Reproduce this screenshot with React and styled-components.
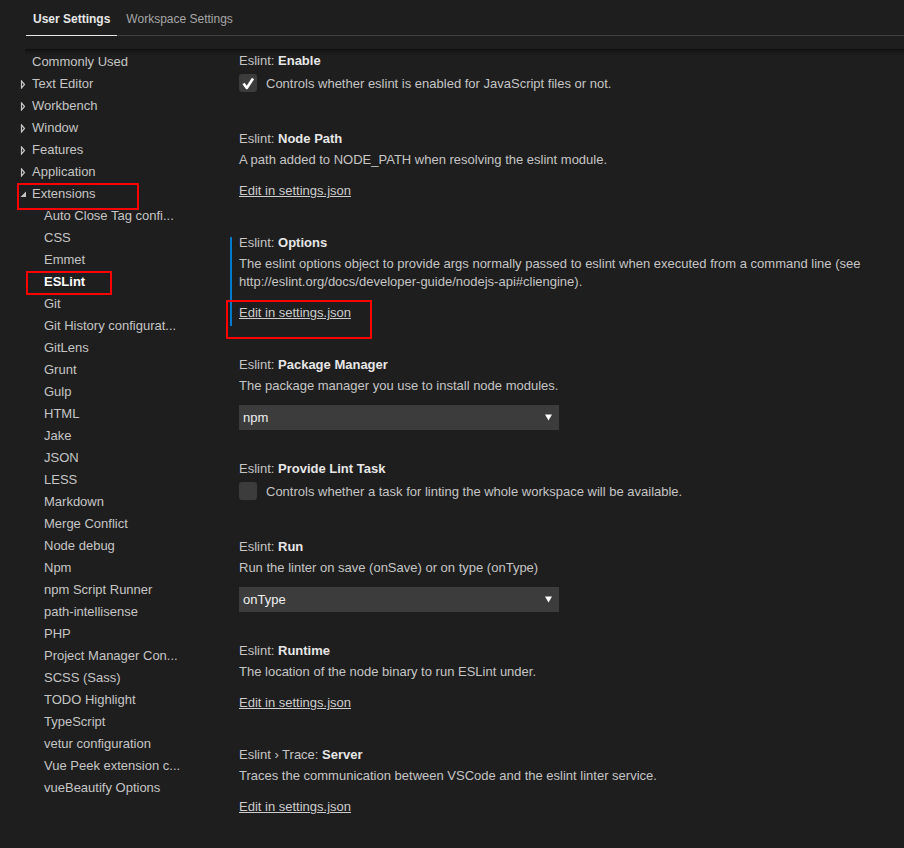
import React from 'react';
import styled, { createGlobalStyle, css } from 'styled-components';

const GlobalStyle = createGlobalStyle`
  html, body {
    margin: 0;
    padding: 0;
    background: #1e1e1e;
  }
  body {
    font-family: "Liberation Sans", Arial, sans-serif;
    font-size: 13px;
    color: #cccccc;
  }
`;

const Page = styled.div`
  min-height: 848px;
  background: #1e1e1e;
  overflow: hidden;
`;

const Header = styled.div`
  display: flex;
  margin-left: 26px;
  height: 35px;
  border-bottom: 1px solid #3f3f3f;
`;

const Tab = styled.div`
  padding: 3px 7px 0;
  margin-right: 2px;
  line-height: 32px;
  font-size: 12px;
  color: #a6a6a6;
  margin-bottom: -1px;
  border-bottom: 1px solid transparent;
  cursor: pointer;
  ${(p) =>
    p.$active &&
    css`
      color: #e7e7e7;
      font-weight: bold;
      border-bottom-color: #e7e7e7;
    `}
`;

const Body = styled.div`
  position: relative;
  display: flex;
  margin-top: 14px;
  &::before {
    content: '';
    position: absolute;
    left: 25px;
    right: 0;
    top: -1px;
    height: 6px;
    box-shadow: #000000 0 6px 6px -6px inset;
  }
`;

const Sidebar = styled.div`
  width: 230px;
  flex-shrink: 0;
  padding-top: 1px;
`;

const Row = styled.div`
  position: relative;
  display: flex;
  align-items: center;
  height: 22px;
  line-height: 22px;
  padding-left: ${(p) => (p.$child ? '44px' : '20px')};
  color: ${(p) => (p.$bold ? '#ffffff' : '#c5c5c5')};
  font-weight: ${(p) => (p.$bold ? 'bold' : 'normal')};
  white-space: nowrap;
  cursor: pointer;
`;

const Twistie = styled.span`
  width: 12px;
  height: 22px;
  display: flex;
  align-items: center;
`;

const Mark = styled.div`
  position: absolute;
  top: ${(p) => p.$top}px;
  left: ${(p) => p.$left}px;
  width: ${(p) => p.$w}px;
  height: ${(p) => p.$h}px;
  border: 2px solid #ff0000;
  box-sizing: border-box;
  pointer-events: none;
`;

const Content = styled.div`
  flex: 1;
  min-width: 0;
  padding-right: 10px;
`;

const Item = styled.div`
  position: relative;
  padding-left: 9px;
  ${(p) =>
    p.$focused &&
    css`
      &::before {
        content: '';
        position: absolute;
        left: 0;
        top: 5px;
        bottom: -4px;
        width: 2px;
        background: #007acc;
      }
    `}
`;

const Title = styled.div`
  line-height: 22px;
  height: 22px;
  color: #c5c5c5;
  b {
    color: #e7e7e7;
  }
`;

const Desc = styled.div`
  margin-top: 1px;
  line-height: 18px;
  color: #c5c5c5;
`;

const LinkRow = styled.div`
  position: relative;
  margin-top: 13px;
  margin-bottom: 32px;
  line-height: 18px;
  display: flex;
`;

const EditLink = styled.a`
  color: #cccccc;
  text-decoration: underline;
  cursor: pointer;
`;

const CheckRow = styled.div`
  display: flex;
  align-items: center;
  height: 22px;
  margin-bottom: 34px;
  color: #c5c5c5;
`;

const Box = styled.span`
  width: 18px;
  height: 18px;
  border-radius: 3px;
  background: #3c3c3c;
  margin-right: 9px;
  flex-shrink: 0;
  display: flex;
`;

const Select = styled.div`
  margin-top: 10px;
  margin-bottom: 28px;
  width: 320px;
  height: 25px;
  background: #3c3c3c;
  color: #f0f0f0;
  display: flex;
  align-items: center;
  justify-content: space-between;
  padding: 0 7px 0 4px;
  box-sizing: border-box;
  cursor: pointer;
`;

const Collapsed = () => (
  <svg width="6" height="9" viewBox="0 0 6 9">
    <polygon points="1.5,1 4.5,4.5 1.5,8" fill="none" stroke="#c5c5c5" strokeWidth="1.2" />
  </svg>
);

const Expanded = () => (
  <svg width="7" height="7" viewBox="0 0 7 7">
    <polygon points="6,0.5 6,6 0.5,6" fill="#c5c5c5" />
  </svg>
);

const Check = () => (
  <svg width="18" height="18" viewBox="0 0 18 18">
    <polyline
      points="4.5,9.5 7.8,14 14,4.5"
      fill="none"
      stroke="#ffffff"
      strokeWidth="2.6"
      strokeLinejoin="round"
    />
  </svg>
);

const Caret = () => (
  <svg width="7" height="7" viewBox="0 0 7 7">
    <polygon points="0,0.5 7,0.5 3.5,6.5" fill="#ffffff" />
  </svg>
);

const tree = [
  { label: 'Commonly Used' },
  { label: 'Text Editor', arrow: 'closed' },
  { label: 'Workbench', arrow: 'closed' },
  { label: 'Window', arrow: 'closed' },
  { label: 'Features', arrow: 'closed' },
  { label: 'Application', arrow: 'closed' },
  { label: 'Extensions', arrow: 'open', mark: { top: 0, left: 17, w: 122, h: 27 } },
  { label: 'Auto Close Tag confi...', child: true },
  { label: 'CSS', child: true },
  { label: 'Emmet', child: true },
  { label: 'ESLint', child: true, bold: true, mark: { top: 0, left: 26, w: 86, h: 24 } },
  { label: 'Git', child: true },
  { label: 'Git History configurat...', child: true },
  { label: 'GitLens', child: true },
  { label: 'Grunt', child: true },
  { label: 'Gulp', child: true },
  { label: 'HTML', child: true },
  { label: 'Jake', child: true },
  { label: 'JSON', child: true },
  { label: 'LESS', child: true },
  { label: 'Markdown', child: true },
  { label: 'Merge Conflict', child: true },
  { label: 'Node debug', child: true },
  { label: 'Npm', child: true },
  { label: 'npm Script Runner', child: true },
  { label: 'path-intellisense', child: true },
  { label: 'PHP', child: true },
  { label: 'Project Manager Con...', child: true },
  { label: 'SCSS (Sass)', child: true },
  { label: 'TODO Highlight', child: true },
  { label: 'TypeScript', child: true },
  { label: 'vetur configuration', child: true },
  { label: 'Vue Peek extension c...', child: true },
  { label: 'vueBeautify Options', child: true },
];

const settings = [
  {
    prefix: 'Eslint: ',
    name: 'Enable',
    type: 'checkbox',
    checked: true,
    desc: 'Controls whether eslint is enabled for JavaScript files or not.',
  },
  {
    prefix: 'Eslint: ',
    name: 'Node Path',
    type: 'link',
    desc: 'A path added to NODE_PATH when resolving the eslint module.',
  },
  {
    prefix: 'Eslint: ',
    name: 'Options',
    type: 'link',
    focused: true,
    marked: true,
    desc: (
      <>
        The eslint options object to provide args normally passed to eslint when executed from a
        command line (see http://eslint.org/docs/developer-guide/nodejs-api#cliengine).
      </>
    ),
  },
  {
    prefix: 'Eslint: ',
    name: 'Package Manager',
    type: 'select',
    value: 'npm',
    desc: 'The package manager you use to install node modules.',
  },
  {
    prefix: 'Eslint: ',
    name: 'Provide Lint Task',
    type: 'checkbox',
    checked: false,
    desc: 'Controls whether a task for linting the whole workspace will be available.',
  },
  {
    prefix: 'Eslint: ',
    name: 'Run',
    type: 'select',
    value: 'onType',
    desc: 'Run the linter on save (onSave) or on type (onType)',
  },
  {
    prefix: 'Eslint: ',
    name: 'Runtime',
    type: 'link',
    desc: 'The location of the node binary to run ESLint under.',
  },
  {
    prefix: 'Eslint \u203A Trace: ',
    name: 'Server',
    type: 'link',
    desc: 'Traces the communication between VSCode and the eslint linter service.',
  },
];

function Setting({ item }) {
  return (
    <Item $focused={item.focused}>
      <Title>
        {item.prefix}
        <b>{item.name}</b>
      </Title>
      {item.type === 'checkbox' ? (
        <CheckRow>
          <Box>{item.checked && <Check />}</Box>
          {item.desc}
        </CheckRow>
      ) : (
        <Desc>{item.desc}</Desc>
      )}
      {item.type === 'link' && (
        <LinkRow>
          <EditLink>Edit in settings.json</EditLink>
          {item.marked && <Mark $top={-4} $left={-13} $w={146} $h={39} />}
        </LinkRow>
      )}
      {item.type === 'select' && (
        <Select>
          <span>{item.value}</span>
          <Caret />
        </Select>
      )}
    </Item>
  );
}

export default function App() {
  return (
    <Page>
      <GlobalStyle />
      <Header>
        <Tab $active>User Settings</Tab>
        <Tab>Workspace Settings</Tab>
      </Header>
      <Body>
        <Sidebar>
          {tree.map((node) => (
            <Row key={node.label} $child={node.child} $bold={node.bold}>
              {!node.child && (
                <Twistie>
                  {node.arrow === 'closed' && <Collapsed />}
                  {node.arrow === 'open' && <Expanded />}
                </Twistie>
              )}
              {node.label}
              {node.mark && (
                <Mark $top={node.mark.top} $left={node.mark.left} $w={node.mark.w} $h={node.mark.h} />
              )}
            </Row>
          ))}
        </Sidebar>
        <Content>
          {settings.map((s) => (
            <Setting key={s.name} item={s} />
          ))}
        </Content>
      </Body>
    </Page>
  );
}
